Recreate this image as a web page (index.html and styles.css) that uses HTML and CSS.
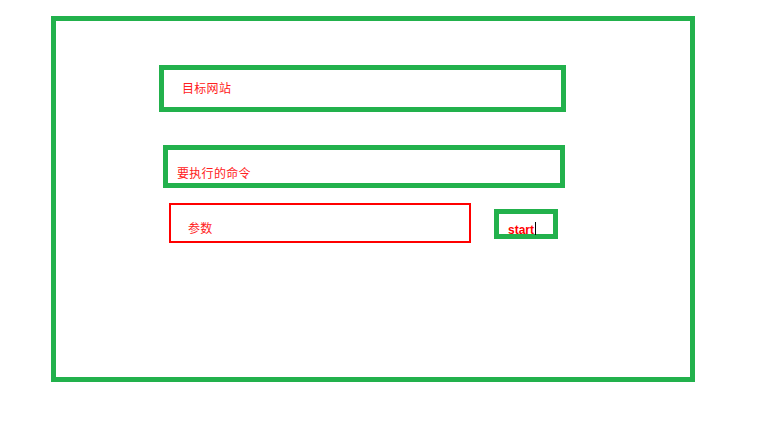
FILE: index.html
```html
<!DOCTYPE html>
<html lang="zh">
<head>
<meta charset="utf-8">
<link rel="stylesheet" href="styles.css">
</head>
<body>
<div class="frame">
  <div class="box box-site"><span class="label">目标网站</span></div>
  <div class="box box-cmd"><span class="label">要执行的命令</span></div>
  <div class="row">
    <div class="param"><span class="label">参数</span></div>
    <div class="btn"><span class="btn-text">start</span><span class="caret"></span></div>
  </div>
</div>
</body>
</html>
```
FILE: styles.css
```css
html, body {
  margin: 0;
  padding: 0;
  background: #ffffff;
}
body {
  padding: 16px 0 0 51px;
}
.frame {
  box-sizing: border-box;
  width: 644px;
  height: 366px;
  border: 5px solid #22b14c;
  display: flex;
  flex-direction: column;
  align-items: flex-start;
}
.label {
  font-family: "Noto Sans CJK SC", "Noto Sans", sans-serif;
  font-size: 12px;
  line-height: 14px;
  color: #ff2020;
  letter-spacing: 0.3px;
  display: block;
}
.box {
  box-sizing: border-box;
  border: 5px solid #22b14c;
}
.box-site {
  margin: 44px 0 0 103px;
  width: 407px;
  height: 47px;
  padding: 11px 0 0 18px;
}
.box-cmd {
  margin: 33px 0 0 107px;
  width: 402px;
  height: 43px;
  padding: 16px 0 0 9px;
}
.row {
  display: flex;
  align-items: flex-start;
  margin: 15px 0 0 113px;
}
.param {
  box-sizing: border-box;
  width: 302px;
  height: 40px;
  border: 2px solid #ff0000;
  padding: 16px 0 0 17px;
}
.btn {
  box-sizing: border-box;
  margin: 6px 0 0 23px;
  width: 64px;
  height: 30px;
  border: 5px solid #22b14c;
  padding: 8px 0 0 9px;
  display: flex;
  align-items: flex-start;
}
.btn-text {
  font-family: "Liberation Sans", Arial, sans-serif;
  font-weight: bold;
  font-size: 12px;
  line-height: 14px;
  color: #ff0000;
  padding-top: 1px;
}
.caret {
  display: block;
  width: 0;
  height: 13px;
  margin: 0 0 0 1px;
  border-left: 1px solid #000000;
}
```
